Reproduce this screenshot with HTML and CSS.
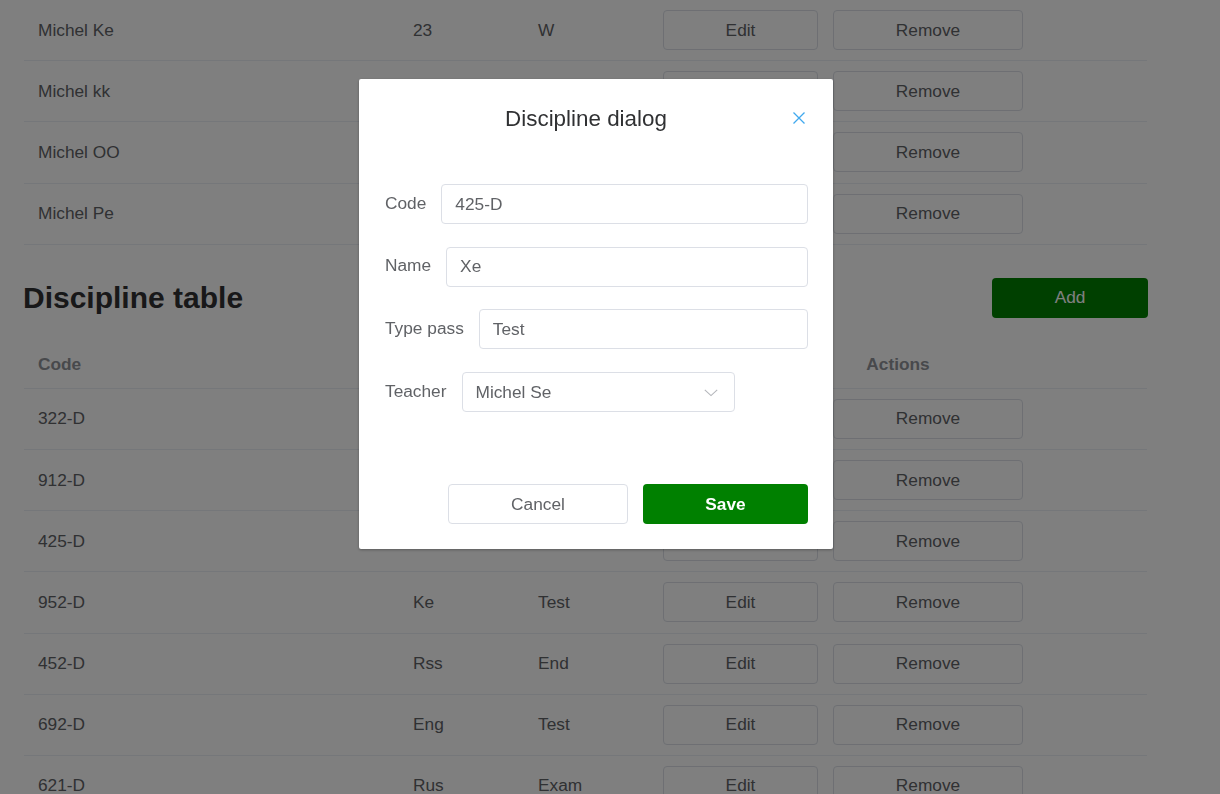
FILE: index.html
```html
<!DOCTYPE html>
<html>
<head>
<meta charset="utf-8">
<link rel="stylesheet" href="styles.css">
</head>
<body>
<div class="page">
  <div class="table table-top">
    <div class="row"><div class="cell">Michel Ke</div><div class="cell">23</div><div class="cell">W</div><div class="cell actions"><button class="btn btn-edit">Edit</button><button class="btn btn-remove">Remove</button></div></div>
    <div class="row"><div class="cell">Michel kk</div><div class="cell">21</div><div class="cell">M</div><div class="cell actions"><button class="btn btn-edit">Edit</button><button class="btn btn-remove">Remove</button></div></div>
    <div class="row"><div class="cell">Michel OO</div><div class="cell">30</div><div class="cell">M</div><div class="cell actions"><button class="btn btn-edit">Edit</button><button class="btn btn-remove">Remove</button></div></div>
    <div class="row"><div class="cell">Michel Pe</div><div class="cell">27</div><div class="cell">W</div><div class="cell actions"><button class="btn btn-edit">Edit</button><button class="btn btn-remove">Remove</button></div></div>
  </div>

  <div class="section-head">
    <h2 class="section-title">Discipline table</h2>
    <button class="btn-add">Add</button>
  </div>

  <div class="table">
    <div class="row head"><div class="cell">Code</div><div class="cell">Name</div><div class="cell">Type</div><div class="cell center">Actions</div></div>
    <div class="row"><div class="cell">322-D</div><div class="cell">Ma</div><div class="cell">Exam</div><div class="cell actions"><button class="btn btn-edit">Edit</button><button class="btn btn-remove">Remove</button></div></div>
    <div class="row"><div class="cell">912-D</div><div class="cell">Ph</div><div class="cell">Test</div><div class="cell actions"><button class="btn btn-edit">Edit</button><button class="btn btn-remove">Remove</button></div></div>
    <div class="row"><div class="cell">425-D</div><div class="cell">Xe</div><div class="cell">Test</div><div class="cell actions"><button class="btn btn-edit">Edit</button><button class="btn btn-remove">Remove</button></div></div>
    <div class="row"><div class="cell">952-D</div><div class="cell">Ke</div><div class="cell">Test</div><div class="cell actions"><button class="btn btn-edit">Edit</button><button class="btn btn-remove">Remove</button></div></div>
    <div class="row"><div class="cell">452-D</div><div class="cell">Rss</div><div class="cell">End</div><div class="cell actions"><button class="btn btn-edit">Edit</button><button class="btn btn-remove">Remove</button></div></div>
    <div class="row"><div class="cell">692-D</div><div class="cell">Eng</div><div class="cell">Test</div><div class="cell actions"><button class="btn btn-edit">Edit</button><button class="btn btn-remove">Remove</button></div></div>
    <div class="row"><div class="cell">621-D</div><div class="cell">Rus</div><div class="cell">Exam</div><div class="cell actions"><button class="btn btn-edit">Edit</button><button class="btn btn-remove">Remove</button></div></div>
  </div>
</div>

<div class="overlay">
  <div class="dialog">
    <div class="dialog-header">
      <span class="dialog-title">Discipline dialog</span>
      <button class="dialog-close" aria-label="Close">
        <svg width="12" height="12" viewBox="0 0 12 12"><path d="M0.5 0.5 L11.5 11.5 M11.5 0.5 L0.5 11.5" stroke="#40a9ee" stroke-width="1.3" fill="none"/></svg>
      </button>
    </div>
    <div class="dialog-body">
      <div class="form-row"><label class="form-label">Code</label><div class="input">425-D</div></div>
      <div class="form-row"><label class="form-label">Name</label><div class="input">Xe</div></div>
      <div class="form-row"><label class="form-label">Type pass</label><div class="input">Test</div></div>
      <div class="form-row"><label class="form-label">Teacher</label>
        <div class="input select">Michel Se
          <svg class="chevron" width="14" height="8" viewBox="0 0 14 8"><path d="M0.8 0.8 L7 6.6 L13.2 0.8" stroke="#b4b6bb" stroke-width="1.1" fill="none"/></svg>
        </div>
      </div>
    </div>
    <div class="dialog-footer">
      <button class="fbtn fbtn-cancel">Cancel</button>
      <button class="fbtn fbtn-save">Save</button>
    </div>
  </div>
</div>
</body>
</html>
```
FILE: styles.css
```css
* { box-sizing: border-box; }
html, body { margin: 0; padding: 0; }
body {
  font-family: "Liberation Sans", Arial, sans-serif;
  font-size: 17.3px;
  color: #606266;
  background: #fff;
  overflow: hidden;
  height: 794px;
}
.page {
  width: 1123px;
  margin-left: 24px;
}
.table { width: 100%; }
.table-top {
  border-top: 1px solid #ebeef5;
  margin-top: -1px;
}
.row {
  display: grid;
  grid-template-columns: 375px 125px 125px 1fr;
  border-bottom: 1px solid #ebeef5;
  height: 61.2px;
  align-items: center;
}
.row.head {
  height: 48px;
  font-weight: bold;
  color: #909399;
}
.cell {
  padding: 0 14px;
  white-space: nowrap;
  line-height: 23px;
}
.cell.center { text-align: center; }
.actions {
  display: flex;
  gap: 15px;
}
.btn {
  height: 40px;
  background: #fff;
  border: 1px solid #dcdfe6;
  border-radius: 4px;
  font-family: inherit;
  font-size: 17.3px;
  color: #606266;
  padding: 0;
}
.btn-edit { width: 155px; }
.btn-remove { width: 190px; }

.section-head {
  display: flex;
  align-items: center;
  justify-content: space-between;
  margin-top: 33px;
  margin-bottom: 23px;
  height: 40px;
}
.section-title {
  margin: 0;
  font-size: 30px;
  font-weight: bold;
  color: #303133;
  margin-left: -1px;
}
.btn-add {
  width: 156px;
  height: 40px;
  background: #008000;
  border: none;
  border-radius: 4px;
  color: #fff;
  font-family: inherit;
  font-size: 17.3px;
  margin-right: -1px;
}

.overlay {
  position: fixed;
  inset: 0;
  background: rgba(0, 0, 0, 0.5);
  padding-top: 79px;
}
.dialog {
  margin-left: 359px;
  width: 474px;
  height: 470px;
  background: #fff;
  border-radius: 2px;
  box-shadow: 0 1px 3px rgba(0, 0, 0, 0.3);
  display: flex;
  flex-direction: column;
}
.dialog-header {
  position: relative;
  padding: 27px 40px 0 20px;
  text-align: center;
  height: 78px;
}
.dialog-title {
  font-size: 22.4px;
  line-height: 26px;
  color: #303133;
}
.dialog-close {
  position: absolute;
  top: 33px;
  right: 28px;
  padding: 0;
  border: none;
  background: none;
  width: 12px;
  height: 12px;
  display: block;
}
.dialog-close svg { display: block; }
.dialog-body {
  padding: 27px 25px 0 26px;
  display: flex;
  flex-direction: column;
  gap: 22.7px;
}
.form-row {
  display: flex;
  align-items: center;
  gap: 15px;
  height: 40px;
}
.form-label {
  color: #606266;
  white-space: nowrap;
  position: relative;
  top: -1px;
}
.input {
  flex: 1;
  height: 40px;
  border: 1px solid #dcdfe6;
  border-radius: 4px;
  padding: 0 13px;
  display: flex;
  align-items: center;
  color: #606266;
}
.input.select {
  flex: 0 0 273px;
  position: relative;
  margin-left: 1px;
  padding-left: 12px;
}
.chevron {
  position: absolute;
  right: 16px;
  top: 16px;
}
.dialog-footer {
  margin-top: auto;
  padding: 0 25px 25px 0;
  display: flex;
  justify-content: flex-end;
  gap: 15px;
}
.fbtn {
  height: 40px;
  border-radius: 4px;
  font-family: inherit;
  font-size: 17.3px;
  padding: 0;
}
.fbtn-cancel {
  width: 180px;
  background: #fff;
  border: 1px solid #dcdfe6;
  color: #606266;
}
.fbtn-save {
  width: 165px;
  background: #008000;
  border: none;
  color: #fff;
  font-weight: bold;
}
```
